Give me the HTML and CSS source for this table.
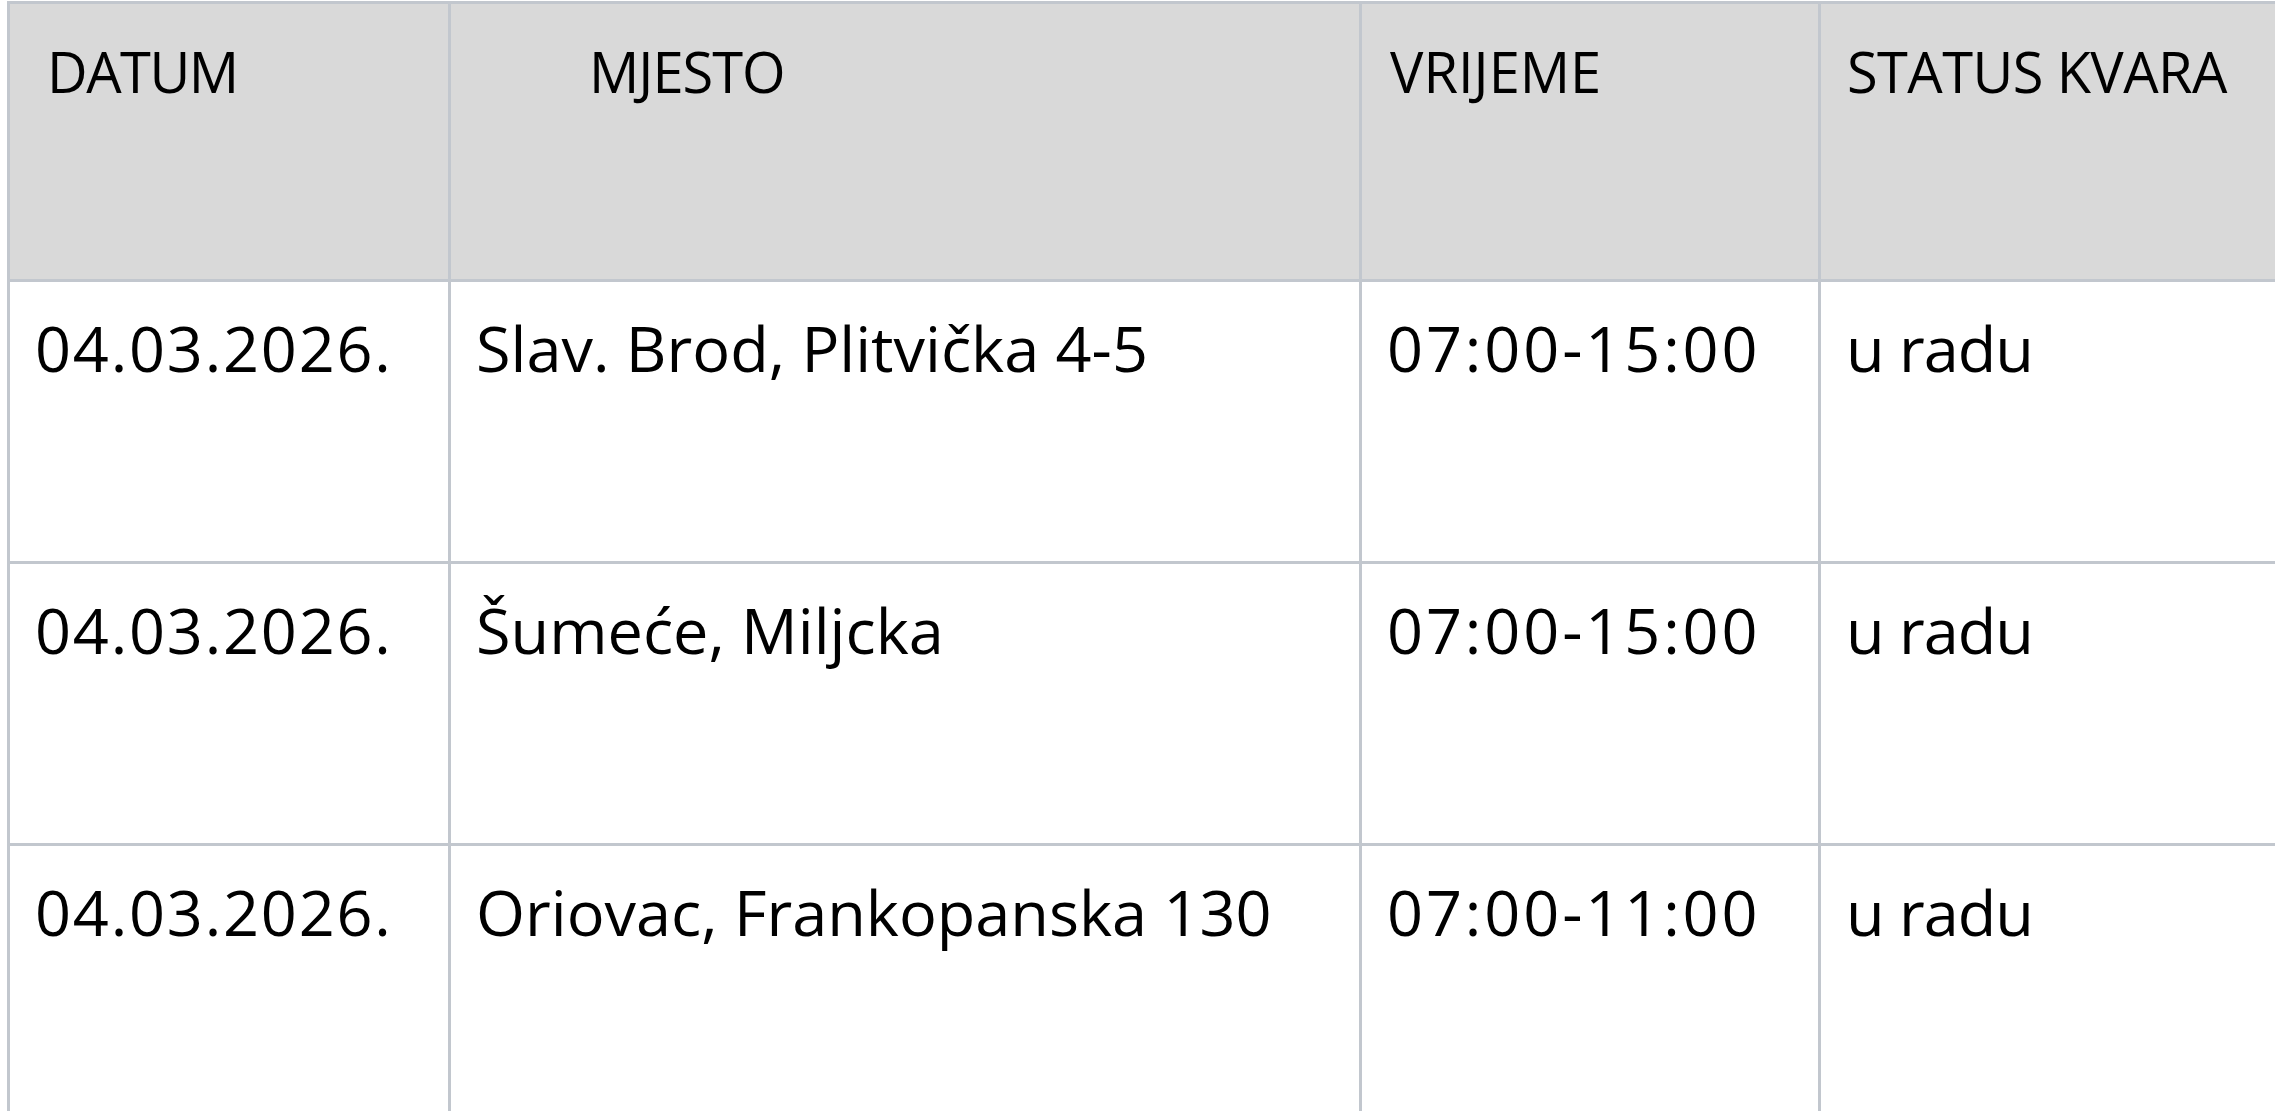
FILE: index.html
```html
<!DOCTYPE html>
<html lang="hr">
<head>
<meta charset="utf-8">
<title>Kvarovi</title>
<link rel="stylesheet" href="styles.css">
</head>
<body>
<table class="outages">
  <colgroup>
    <col class="c-date">
    <col class="c-place">
    <col class="c-time">
    <col class="c-status">
  </colgroup>
  <thead>
    <tr class="head-row">
      <th class="h-date">DATUM</th>
      <th class="h-place">MJESTO</th>
      <th class="h-time">VRIJEME</th>
      <th class="h-status">STATUS KVARA</th>
    </tr>
  </thead>
  <tbody>
    <tr class="row">
      <td class="num">04.03.2026.</td>
      <td class="place">Slav. Brod, Plitvička 4-5</td>
      <td class="num time">07:00-15:00</td>
      <td class="status">u radu</td>
    </tr>
    <tr class="row">
      <td class="num">04.03.2026.</td>
      <td class="place">Šumeće, Miljcka</td>
      <td class="num time">07:00-15:00</td>
      <td class="status">u radu</td>
    </tr>
    <tr class="row">
      <td class="num">04.03.2026.</td>
      <td class="place">Oriovac, Frankopanska 130</td>
      <td class="num time">07:00-11:00</td>
      <td class="status">u radu</td>
    </tr>
  </tbody>
</table>
</body>
</html>
```
FILE: styles.css
```css
html, body {
  margin: 0;
  padding: 0;
  background: #ffffff;
  overflow: hidden;
}

body {
  font-family: "Open Sans", "Noto Sans", sans-serif;
  color: #000000;
}

.outages {
  margin: 1px 0 0 7px;
  border-collapse: separate;
  border-spacing: 0;
  table-layout: fixed;
  width: 2414px;
  border-top: 3px solid #c2c7ce;
  border-left: 3px solid #c2c7ce;
}

.c-date { width: 441px; }
.c-place { width: 911px; }
.c-time { width: 459px; }
.c-status { width: 600px; }

.outages th,
.outages td {
  box-sizing: border-box;
  border-right: 3px solid #c2c7ce;
  border-bottom: 3px solid #c2c7ce;
  vertical-align: top;
  text-align: left;
  padding: 0 0 0 25px;
}

.head-row { height: 278px; }

.outages th {
  background: #d9d9d9;
  font-weight: 400;
  font-size: 56px;
  line-height: normal;
  padding-top: 29px;
  letter-spacing: -1px;
}

.outages th.h-date { padding-left: 37px; letter-spacing: -1.5px; }
.outages th.h-place { padding-left: 138px; }
.outages th.h-time { padding-left: 28px; letter-spacing: 0; }
.outages th.h-status { padding-left: 26px; letter-spacing: -0.6px; }

.row { height: 282px; }

.outages td {
  font-size: 63px;
  line-height: normal;
  padding-top: 23px;
}

.outages td.num { letter-spacing: 1.8px; }
.outages td.time { letter-spacing: 2.9px; }
.outages td.place { letter-spacing: 0; }
.outages td.status { letter-spacing: -1px; }
```
